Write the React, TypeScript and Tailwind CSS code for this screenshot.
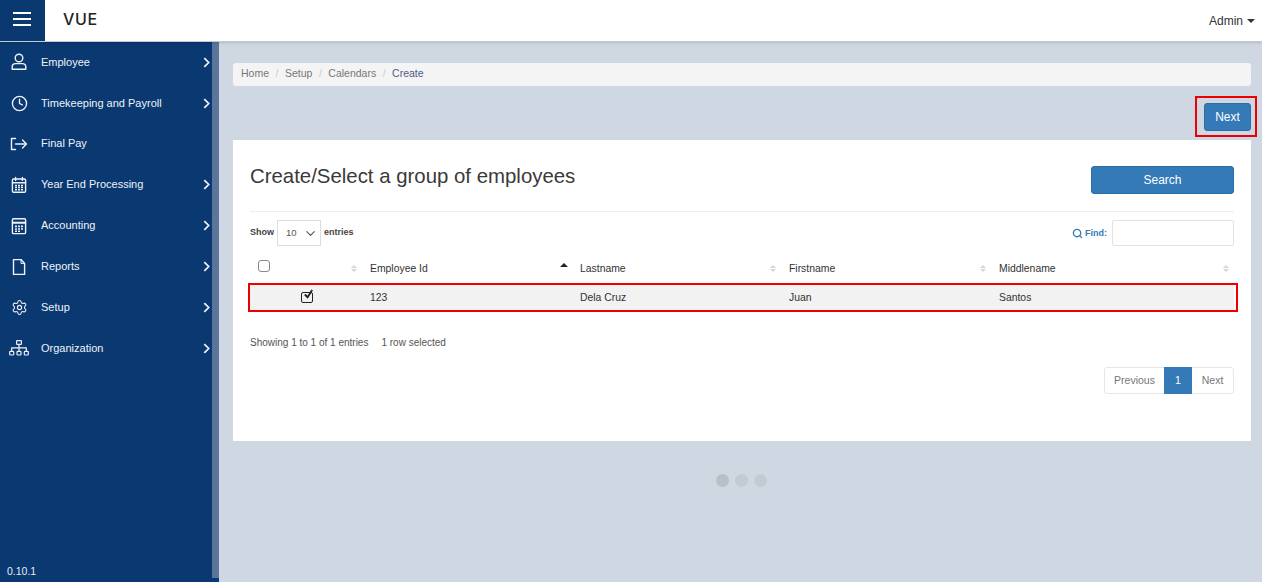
import { ChevronDown, Clock, Search, Settings } from 'lucide-react'
import type { ReactNode } from 'react'

function Glyph({ children }: { children: ReactNode }) {
  return (
    <svg viewBox="0 0 20 20" width="20" height="20" fill="none" stroke="currentColor" strokeWidth="1.4" strokeLinecap="round" strokeLinejoin="round">
      {children}
    </svg>
  )
}

const UserIcon = () => (
  <Glyph>
    <circle cx="10" cy="6" r="3.8" />
    <path d="M3.2 17.2v-2.4c0-2 1.5-3.2 3.4-3.2h6.8c1.9 0 3.4 1.2 3.4 3.2v2.4z" />
  </Glyph>
)
const ClockIcon = () => <Clock size={17} strokeWidth={1.9} />
const ExitIcon = () => (
  <Glyph>
    <path d="M6.5 4.5H2.5v11h4" />
    <path d="M6.5 10h11M13.5 6l4 4-4 4" />
  </Glyph>
)
const CalendarIcon = () => (
  <Glyph>
    <rect x="3.4" y="4" width="13.2" height="13.2" rx="1.2" />
    <path d="M3.4 7.8h13.2M6.6 2.4v3M13.4 2.4v3" />
    <path d="M6 10.4h8M6 12.6h8M6 14.8h8" strokeWidth="1.5" strokeLinecap="butt" strokeDasharray="2 1" />
  </Glyph>
)
const CalculatorIcon = () => (
  <Glyph>
    <rect x="3.4" y="2.8" width="13.2" height="14.8" rx="1.2" />
    <path d="M3.8 6.8h12.4" strokeWidth="2" />
    <path d="M6 10.4h8M6 13h8M6 15.2h5" strokeWidth="1.6" strokeLinecap="butt" strokeDasharray="2 1" />
  </Glyph>
)
const FileIcon = () => (
  <Glyph>
    <path d="M4.5 2.6h7.5l3.6 3.8v11H4.5z" />
    <path d="M12 2.6v3.8h3.6" strokeWidth="1" />
  </Glyph>
)
const GearIcon = () => <Settings size={17} strokeWidth={1.5} />
const OrgIcon = () => (
  <svg viewBox="0 0 20 16" width="20" height="16" fill="none" stroke="currentColor" strokeWidth="1.2">
    <rect x="7.6" y="0.7" width="4.8" height="3.6" rx="0.6" />
    <rect x="0.7" y="11.4" width="4" height="3.6" rx="0.8" />
    <rect x="8" y="11.4" width="4" height="3.6" rx="0.8" />
    <rect x="15.3" y="11.4" width="4" height="3.6" rx="0.8" />
    <path d="M10 4.3v7.1M2.7 11.4V7.8h14.6v3.6" />
  </svg>
)

const menuItems = [
  { label: 'Employee', icon: UserIcon, arrow: true },
  { label: 'Timekeeping and Payroll', icon: ClockIcon, arrow: true },
  { label: 'Final Pay', icon: ExitIcon, arrow: false },
  { label: 'Year End Processing', icon: CalendarIcon, arrow: true },
  { label: 'Accounting', icon: CalculatorIcon, arrow: true },
  { label: 'Reports', icon: FileIcon, arrow: true },
  { label: 'Setup', icon: GearIcon, arrow: true },
  { label: 'Organization', icon: OrgIcon, arrow: true },
]

const crumbs = ['Home', 'Setup', 'Calendars', 'Create']

function SortArrows({ active }: { active?: boolean }) {
  if (active) {
    return <span className="mb-[6px] h-0 w-0 border-x-[4px] border-b-[4px] border-x-transparent border-b-[#222]" />
  }
  return (
    <span className="flex flex-col gap-[1px]">
      <span className="h-0 w-0 border-x-[3px] border-b-[3px] border-x-transparent border-b-[#d3d6da]" />
      <span className="h-0 w-0 border-x-[3px] border-t-[3px] border-x-transparent border-t-[#d3d6da]" />
    </span>
  )
}

function HeaderCell({ label, active }: { label: string; active?: boolean }) {
  return (
    <div className={active ? 'flex items-center justify-between pl-2 pr-[4px]' : 'flex items-center justify-between pl-2 pr-[5px]'}>
      <span>{label}</span>
      <SortArrows active={active} />
    </div>
  )
}

export default function App() {
  return (
    <div className="flex h-[582px] w-[1262px] flex-col overflow-hidden bg-[#ced7e2] font-['Liberation_Sans',Arial,sans-serif] text-[#333]">
      <header className="z-10 flex h-[42px] shrink-0 items-center border-b border-[#c3cad3] bg-white shadow-sm">
        <button className="flex h-full w-[45px] flex-col items-center justify-center gap-[4px] bg-[#0a3870] pb-[3px] pr-[1px]">
          <span className="h-[2px] w-[18px] bg-white" />
          <span className="h-[2px] w-[18px] bg-white" />
          <span className="h-[2px] w-[18px] bg-white" />
        </button>
        <div className="mb-[3px] ml-[18px] font-['Inter',sans-serif] text-[16px] font-medium tracking-[0.6px] text-[#222]">VUE</div>
        <div className="ml-auto flex items-center gap-[4px] pr-[7px] text-[12px] text-[#333]">
          Admin
          <span className="h-0 w-0 border-x-[4px] border-t-[4px] border-x-transparent border-t-[#333]" />
        </div>
      </header>

      <div className="flex min-h-0 flex-1">
        <aside className="relative flex w-[219px] shrink-0 bg-[#0a3870] text-white">
          <nav className="w-[212px]">
            {menuItems.map((item) => (
              <div key={item.label} className="flex h-[40.85px] items-center">
                <div className="flex w-[41px] shrink-0 justify-center pr-[3px] text-[#eef3f9]">
                  <item.icon />
                </div>
                <span className="mb-[1px] text-[11px] text-[#eef3f9]">{item.label}</span>
                {item.arrow && (
                  <svg viewBox="0 0 8 12" className="ml-auto mr-[2px] h-[11px] w-[7px] text-[#eef3f9]" fill="none" stroke="currentColor" strokeWidth="2">
                    <path d="M1.5 1 L6.5 6 L1.5 11" />
                  </svg>
                )}
              </div>
            ))}
          </nav>
          <div className="mb-[4px] w-[7px] bg-[#5a7599]" />
          <div className="absolute bottom-[2px] left-[7px] text-[10.5px] text-[#e8eef6]">0.10.1</div>
        </aside>

        <main className="min-w-0 flex-1 pl-[14px] pr-[11px] pt-[21px]">
          <div className="flex h-[23px] items-center gap-[6.5px] rounded-[3px] bg-[#f4f4f4] px-2 pb-[1px] text-[10.5px] text-[#777]">
            {crumbs.map((crumb, i) => (
              <span key={crumb} className="flex items-center gap-[6.5px]">
                {i > 0 && <span className="text-[#ccc]">/</span>}
                <span className={i === 3 ? 'text-[#4f5a8a]' : ''}>{crumb}</span>
              </span>
            ))}
          </div>

          <div className="mt-[17px] flex justify-end">
            <button className="h-[28px] w-[47px] rounded-[3px] border border-[#2e6da4] bg-[#337ab7] text-[12px] text-white">Next</button>
          </div>

          <section className="mt-[9px] h-[301px] bg-white px-[17px]">
            <div className="flex h-[72px] items-start justify-between border-b border-[#eee]">
              <h1 className="mt-[26px] text-[20.4px] leading-none text-[#3a3a3a]">Create/Select a group of employees</h1>
              <button className="mt-[26px] h-[28px] w-[143px] rounded-[3px] border border-[#2e6da4] bg-[#337ab7] text-[12px] text-white">Search</button>
            </div>

            <div className="mt-[8px] flex items-center justify-between">
              <div className="flex items-center gap-[3px] text-[9px] font-bold text-[#444]">
                <span>Show</span>
                <div className="flex h-[26px] w-[44px] items-center justify-between border border-[#ddd] pl-[8px] pr-[2px] text-[9.5px] font-normal text-[#555]">
                  10
                  <ChevronDown size={15} strokeWidth={1.8} />
                </div>
                <span>entries</span>
              </div>
              <div className="flex items-center gap-[5px] text-[9px] font-bold text-[#337ab7]">
                <span className="mt-[1px] flex items-center gap-[2px]">
                  <Search size={11} strokeWidth={3} />
                  Find:
                </span>
                <div className="h-[26px] w-[122px] rounded-[2px] border border-[#e3e3e3]" />
              </div>
            </div>

            <div className="mt-[8px] text-[10.4px]">
              <div className="grid h-[29px] grid-cols-[112px_210px_209px_210px_1fr] items-center text-[#333]">
                <div className="flex items-center justify-between pl-[7.5px] pr-[5px]">
                  <span className="-mt-[5px] h-[12px] w-[12px] rounded-[3px] border border-[#888]" />
                  <SortArrows />
                </div>
                <HeaderCell label="Employee Id" active />
                <HeaderCell label="Lastname" />
                <HeaderCell label="Firstname" />
                <HeaderCell label="Middlename" />
              </div>
              <div className="relative grid h-[29px] grid-cols-[112px_210px_209px_210px_1fr] items-center bg-[#f2f2f2] text-[#333]">
                <div className="flex justify-center pl-[2px]">
                  <span className="relative h-[11px] w-[12px] rounded-[2px] border border-[#222]">
                    <svg viewBox="0 0 12 12" className="absolute -top-[4px] left-[1px] h-[11px] w-[11px]">
                      <path d="M2 6 L5 9 L10 1" fill="none" stroke="#222" strokeWidth="2" />
                    </svg>
                  </span>
                </div>
                <div className="pl-2">123</div>
                <div className="pl-2">Dela Cruz</div>
                <div className="pl-2">Juan</div>
                <div className="pl-2">Santos</div>
                <div className="absolute -left-[2px] -right-[4px] inset-y-0 border-2 border-[#ee0000]" />
              </div>
            </div>

            <div className="mt-[23px] flex gap-[13px] text-[10px] text-[#555]">
              <span>Showing 1 to 1 of 1 entries</span>
              <span>1 row selected</span>
            </div>

            <div className="mt-[17px] flex justify-end">
              <div className="flex h-[27px] items-stretch rounded-[3px] border border-[#e6e6e6] text-[10.5px] text-[#777]">
                <span className="flex w-[59px] items-center justify-center">Previous</span>
                <span className="-my-px flex w-[28px] items-center justify-center bg-[#337ab7] text-white">1</span>
                <span className="flex w-[41px] items-center justify-center">Next</span>
              </div>
            </div>
          </section>

          <div className="mt-[33px] flex justify-center gap-[6px] pr-[2px]">
            <span className="h-[13px] w-[13px] rounded-full bg-[#b9bfc5]" />
            <span className="h-[13px] w-[13px] rounded-full bg-[#c3cad1]" />
            <span className="h-[13px] w-[13px] rounded-full bg-[#c3cad1]" />
          </div>
        </main>
      </div>

      <div className="absolute left-[1195px] top-[96px] h-[41px] w-[62px] border-2 border-[#ee0000]" />
    </div>
  )
}
